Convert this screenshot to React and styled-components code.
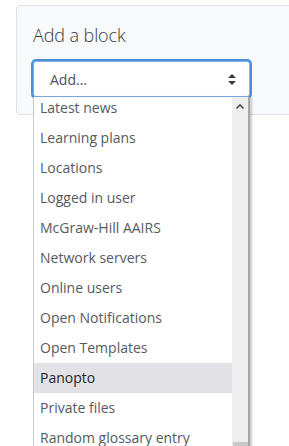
import React from "react";
import styled, { createGlobalStyle } from "styled-components";

const GlobalStyle = createGlobalStyle`
  body {
    margin: 0;
    background: #ffffff;
    font-family: "Open Sans", "Noto Sans", sans-serif;
    overflow: hidden;
  }
`;

const Page = styled.div`
  width: 289px;
  height: 446px;
  overflow: hidden;
  padding: 5px 0 0 16px;
  box-sizing: border-box;
`;

const Card = styled.div`
  position: relative;
  width: 320px;
  height: 110px;
  box-sizing: border-box;
  background: #f8f9fa;
  border: 1px solid #dee2e6;
  border-radius: 4px;
  padding: 16px 0 0 16px;
`;

const Title = styled.div`
  font-size: 18px;
  font-weight: 300;
  color: #373a3c;
  line-height: 26px;
  letter-spacing: -0.1px;
`;

const SelectWrap = styled.div`
  position: relative;
  margin-top: 13px;
  width: 217px;
`;

const Select = styled.div`
  height: 36px;
  box-sizing: border-box;
  border: 1px solid #7fb2e8;
  border-radius: 3px;
  box-shadow: 0 0 0 2px #4a90d9;
  background: #ffffff;
  display: flex;
  align-items: center;
  justify-content: space-between;
  padding: 0 13px 0 16px;
  font-size: 14px;
  color: #495057;
`;

const Menu = styled.div`
  position: absolute;
  left: 0;
  top: 36px;
  width: 217px;
  height: 360px;
  box-sizing: border-box;
  background: #ffffff;
  border-left: 1px solid #c9c9c9;
  border-right: 2px solid #a6a6a6;
  box-shadow: 2px 0 2px rgba(0, 0, 0, 0.2);
  display: flex;
  overflow: hidden;
`;

const List = styled.div`
  flex: 1;
  margin-top: -4px;
`;

const Item = styled.div`
  height: 30px;
  line-height: 30px;
  padding-left: 6px;
  font-size: 14px;
  color: ${(p) => (p.$active ? "#212529" : "#555a5f")};
  background: ${(p) => (p.$active ? "#e1e1e6" : "transparent")};
  white-space: nowrap;
`;

const Scrollbar = styled.div`
  width: 16px;
  background: #eeeeee;
  display: flex;
  flex-direction: column;
  justify-content: space-between;
  align-items: center;
`;

const ScrollUp = styled.div`
  height: 19px;
  display: flex;
  align-items: center;
  justify-content: center;
`;

const Thumb = styled.div`
  width: 15px;
  height: 27px;
  background: #c8c8c8;
  margin-bottom: -12px;
`;

const items = [
  "Latest news",
  "Learning plans",
  "Locations",
  "Logged in user",
  "McGraw-Hill AAIRS",
  "Network servers",
  "Online users",
  "Open Notifications",
  "Open Templates",
  "Panopto",
  "Private files",
  "Random glossary entry",
];

const App = () => {
  return (
    <>
      <GlobalStyle />
      <Page>
        <Card>
          <Title>Add a block</Title>
          <SelectWrap>
            <Select>
              <span>Add...</span>
              <svg width="8" height="11" viewBox="0 0 8 11">
                <path d="M4 0L8 4H0Z" fill="#343a40" />
                <path d="M4 11L0 7H8Z" fill="#343a40" />
              </svg>
            </Select>
            <Menu>
              <List>
                {items.map((name) => (
                  <Item key={name} $active={name === "Panopto"}>
                    {name}
                  </Item>
                ))}
              </List>
              <Scrollbar>
                <ScrollUp>
                  <svg width="8" height="5" viewBox="0 0 8 5">
                    <path d="M0.5 4.5L4 1L7.5 4.5" fill="none" stroke="#505050" strokeWidth="1.6" />
                  </svg>
                </ScrollUp>
                <Thumb />
              </Scrollbar>
            </Menu>
          </SelectWrap>
        </Card>
      </Page>
    </>
  );
};

export default App;
